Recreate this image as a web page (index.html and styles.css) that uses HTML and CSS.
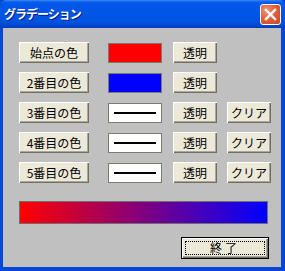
FILE: index.html
```html
<!DOCTYPE html>
<html>
<head>
<meta charset="utf-8">
<link rel="stylesheet" href="styles.css">
</head>
<body>
<div class="window">
  <div class="titlebar">
    <span class="title">グラデーション</span>
    <div class="close">
      <svg width="13" height="13" viewBox="0 0 13 13"><path d="M2 2 L11 11 M11 2 L2 11" stroke="#fff" stroke-width="2.4" stroke-linecap="square"/></svg>
    </div>
  </div>
  <div class="client">
    <div class="rows">
      <div class="row">
        <button class="btn name">始点の色</button>
        <div class="swatch red"></div>
        <button class="btn small">透明</button>
      </div>
      <div class="row">
        <button class="btn name">2番目の色</button>
        <div class="swatch blue"></div>
        <button class="btn small">透明</button>
      </div>
      <div class="row">
        <button class="btn name">3番目の色</button>
        <div class="swatch line"><span></span></div>
        <button class="btn small">透明</button>
        <button class="btn small">クリア</button>
      </div>
      <div class="row">
        <button class="btn name">4番目の色</button>
        <div class="swatch line"><span></span></div>
        <button class="btn small">透明</button>
        <button class="btn small">クリア</button>
      </div>
      <div class="row">
        <button class="btn name">5番目の色</button>
        <div class="swatch line"><span></span></div>
        <button class="btn small">透明</button>
        <button class="btn small">クリア</button>
      </div>
    </div>
    <div class="gradient"></div>
    <div class="footer">
      <button class="btn default"><span class="focus">終了</span></button>
    </div>
  </div>
</div>
</body>
</html>
```
FILE: styles.css
```css
html, body {
  margin: 0;
  padding: 0;
  background: #0a3fc0;
}
.window {
  width: 285px;
  height: 271px;
  box-sizing: border-box;
  display: flex;
  flex-direction: column;
  background: #0747d6;
  font-family: "Noto Sans CJK JP", "DejaVu Sans", sans-serif;
}
.titlebar {
  height: 28px;
  flex: none;
  display: flex;
  align-items: center;
  justify-content: space-between;
  padding: 0 4px 0 4px;
  box-sizing: border-box;
  background: linear-gradient(to bottom, #3c8cf6 0px, #0a5ceb 2px, #0157e8 5px, #0055e5 14px, #0052e0 22px, #0046cb 26px, #003cb8 28px);
  border-radius: 6px 6px 0 0;
}
.title {
  color: #fff;
  font-size: 12px;
  font-weight: bold;
  letter-spacing: -1px;
  text-shadow: 1px 1px 0 #0a1f8a;
  margin-top: -1px;
}
.close {
  width: 21px;
  height: 21px;
  box-sizing: border-box;
  border: 1px solid #fff;
  border-radius: 3px;
  background: radial-gradient(circle at 30% 30%, #f29476 0%, #e2603a 45%, #c8441c 100%);
  display: flex;
  align-items: center;
  justify-content: center;
  margin-top: 1px;
}
.close svg { display: block; }
.client {
  flex: 1;
  margin: 0 4px 4px 3px;
  background: #c0c0c0;
  padding: 14px 0 0 16px;
  display: flex;
  flex-direction: column;
}
.rows {
  display: flex;
  flex-direction: column;
  gap: 9px;
}
.row {
  display: flex;
  align-items: center;
  height: 21px;
}
.btn {
  font-family: "Noto Sans CJK JP", "DejaVu Sans", sans-serif;
  font-size: 12px;
  color: #000;
  background: #ece9d8;
  border: none;
  margin: 0;
  padding: 0;
  height: 21px;
  line-height: 21px;
  box-shadow: inset 1px 1px 0 #fff, inset -1px -1px 0 #716f64, inset -2px -2px 0 #aca899;
  text-align: center;
  box-sizing: border-box;
}
.btn.name {
  width: 70px;
}
.btn.small {
  width: 44px;
  margin-left: 11px;
}
.btn.small + .btn.small {
  margin-left: 10px;
}
.swatch {
  width: 54px;
  height: 20px;
  box-sizing: border-box;
  border: 1px solid #7a7a6e;
  margin-left: 19px;
  display: flex;
  align-items: center;
  justify-content: center;
}
.red { background: #ff0000; }
.blue { background: #0000ff; }
.line { background: #fff; }
.line span {
  display: block;
  width: 42px;
  height: 2px;
  background: #000;
}
.gradient {
  width: 249px;
  height: 23px;
  box-sizing: border-box;
  margin-top: 18px;
  border: 1px solid #6e6e6e;
  background: linear-gradient(to right, #ff0000, #0000ff);
}
.footer {
  display: flex;
  justify-content: flex-end;
  width: 250px;
  margin-top: 13px;
}
.btn.default {
  width: 88px;
  height: 22px;
  border: 1px solid #000;
  box-shadow: inset 1px 1px 0 #fff, inset -1px -1px 0 #716f64, inset -2px -2px 0 #aca899;
  padding: 3px;
  display: flex;
}
.focus {
  flex: 1;
  border: 1px dotted #000;
  line-height: 12px;
  display: flex;
  align-items: center;
  justify-content: center;
  letter-spacing: 3px;
}
```
